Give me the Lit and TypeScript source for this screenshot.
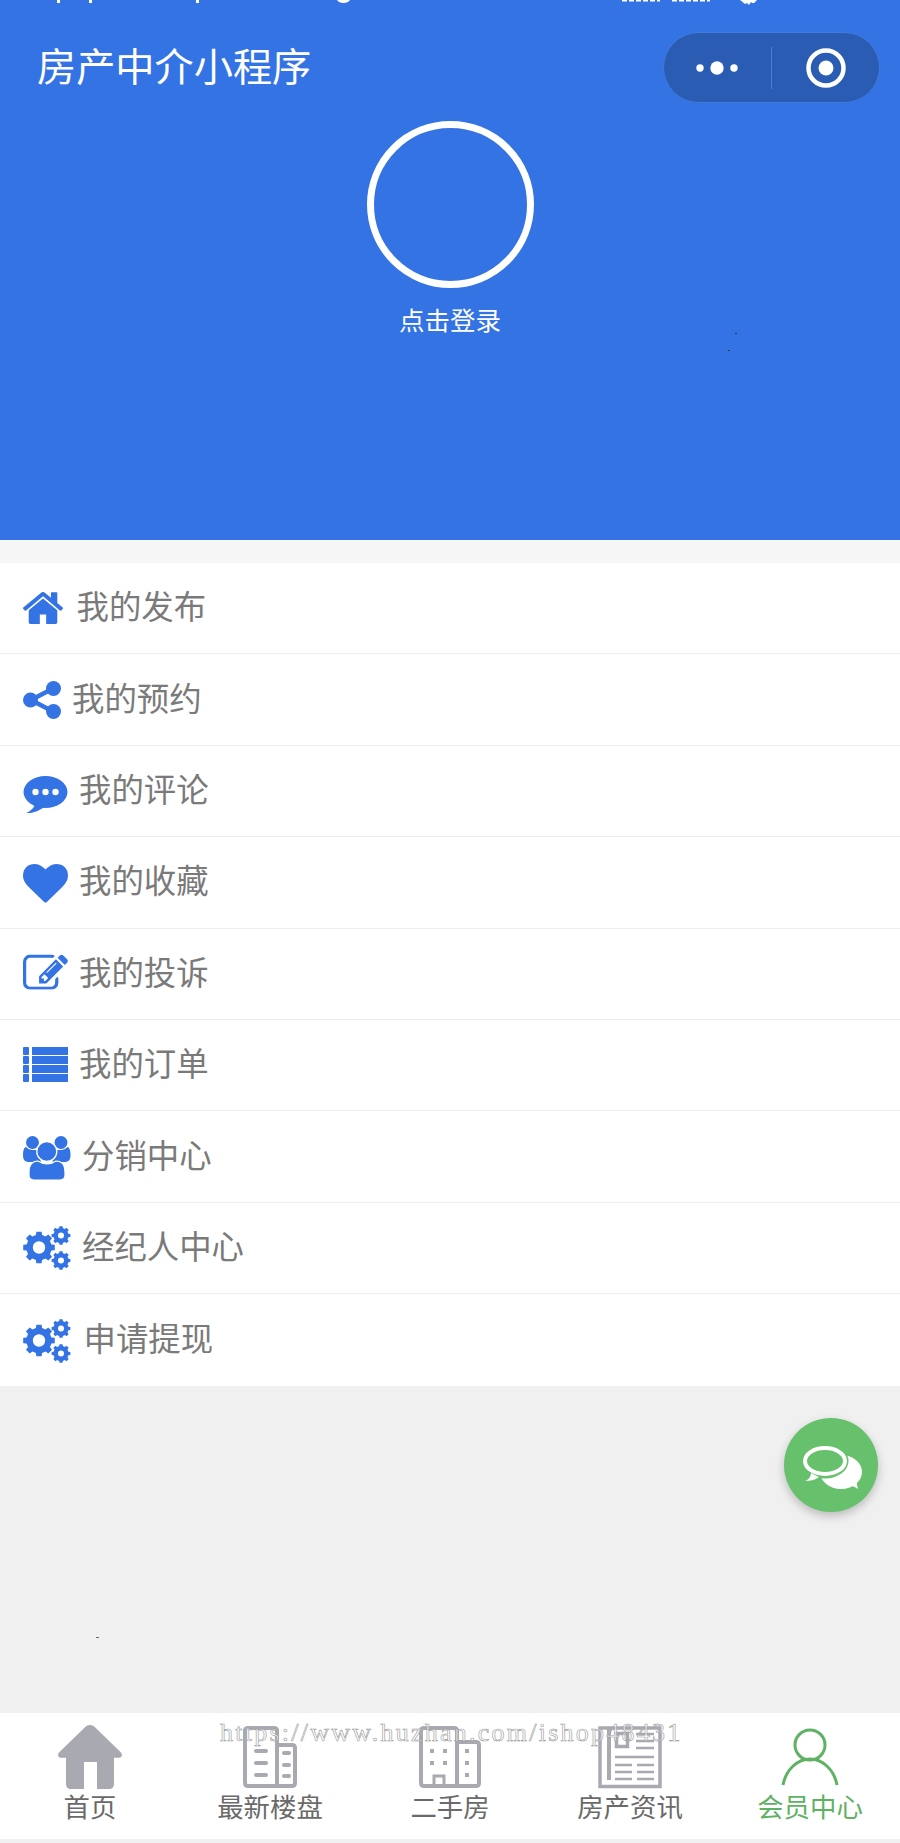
import { LitElement, html, css, svg } from "lit";
import { customElement } from "lit/decorators.js";

const BLUE = "#3373e4";

function gear(cx: number, cy: number, ro: number, ri: number, hole: number, teeth = 8): string {
  const pts: string[] = [];
  const step = (Math.PI * 2) / teeth;
  for (let i = 0; i < teeth; i++) {
    const a = i * step - Math.PI / 2;
    const w = step * 0.21;
    const w2 = step * 0.31;
    const p = [
      [ri, a - w2],
      [ro, a - w],
      [ro, a + w],
      [ri, a + w2],
    ];
    for (const [r, t] of p) {
      pts.push(`${(cx + r * Math.cos(t)).toFixed(2)} ${(cy + r * Math.sin(t)).toFixed(2)}`);
    }
  }
  const h = `M${cx - hole} ${cy}a${hole} ${hole} 0 1 0 ${hole * 2} 0a${hole} ${hole} 0 1 0 ${-hole * 2} 0z`;
  return `M${pts.join("L")}z${h}`;
}

const cogs = svg`<g fill="${BLUE}" fill-rule="evenodd">
  <path d="${gear(16, 21.5, 16, 12.8, 6.2)}" />
  <path d="${gear(38, 9.5, 9.5, 7.6, 3)}" />
  <path d="${gear(38, 34.5, 9.5, 7.6, 3)}" />
</g>`;

interface MenuItem {
  label: string;
  w: number;
  h: number;
  box: string;
  gap: number;
  dy: number;
  art: unknown;
}

const items: MenuItem[] = [
  {
    label: "我的发布",
    w: 40,
    h: 32,
    box: "26 253 1612 1283",
    gap: 13.5,
    dy: 0,
    art: svg`<path fill="${BLUE}" d="M1408 992v480q0 26-19 45t-45 19h-384v-384h-256v384h-384q-26 0-45-19t-19-45v-480q0-1 .5-3t.5-3l575-474 575 474q1 2 1 6zm223-69l-62 74q-8 9-21 11h-3q-13 0-21-7l-692-577-692 577q-12 8-24 7-13-2-21-11l-62-74q-8-10-7-23.5t11-21.5l719-599q32-26 76-26t76 26l244 204v-195q0-14 9-23t23-9h192q14 0 23 9t9 23v408l219 182q10 8 11 21.5t-7 23.5z"/>`,
  },
  {
    label: "我的预约",
    w: 38,
    h: 38,
    box: "0 0 38 38",
    gap: 11,
    dy: 0,
    art: svg`<g fill="${BLUE}"><circle cx="7.5" cy="19" r="7.5"/><circle cx="30.5" cy="7.5" r="7.500"/><circle cx="30.500" cy="30.500" r="7.500"/></g>
      <path d="M8 19L30 7.5M8 19L30 30.5" stroke="${BLUE}" stroke-width="4.5" fill="none"/>`,
  },
  {
    label: "我的评论",
    w: 45,
    h: 38,
    box: "0 0 45 38",
    gap: 11,
    dy: 4,
    art: svg`<ellipse cx="22.5" cy="16" rx="22" ry="16" fill="${BLUE}"/>
      <path d="M12 27C12 31 8 35 3 37C11 37.5 18 34 22 30Z" fill="${BLUE}"/>
      <g fill="#fff"><circle cx="12.5" cy="16" r="3.2"/><circle cx="22.5" cy="16" r="3.2"/><circle cx="32.5" cy="16" r="3.2"/></g>`,
  },
  {
    label: "我的收藏",
    w: 45,
    h: 38.6,
    box: "0 128 1792 1536",
    gap: 11,
    dy: 1,
    art: svg`<path fill="${BLUE}" d="M896 1664q-26 0-44-18l-624-602q-10-8-27.5-26t-55.5-65.5-68-97.5-53.5-121-23.5-138q0-220 127-344t351-124q62 0 126.5 21.5t120 58 95.5 68.5 76 68q36-36 76-68t95.5-68.5 120-58 126.5-21.5q224 0 351 124t127 344q0 221-229 450l-623 600q-18 18-44 18z"/>`,
  },
  {
    label: "我的投诉",
    w: 45,
    h: 35.4,
    box: "0 128 1792 1408",
    gap: 11,
    dy: -1.5,
    art: svg`<path fill="${BLUE}" d="M888 1184l116-116-152-152-116 116v56h96v96h56zm440-720q-16-16-33 1l-350 350q-17 17-1 33t33-1l350-350q17-17 1-33zm80 594v190q0 119-84.5 203.5t-203.5 84.5h-832q-119 0-203.5-84.5t-84.5-203.5v-832q0-119 84.5-203.5t203.5-84.5h832q63 0 117 25 15 7 18 23 3 17-9 29l-49 49q-14 14-32 8-23-6-45-6h-832q-66 0-113 47t-47 113v832q0 66 47 113t113 47h832q66 0 113-47t47-113v-126q0-13 9-22l64-64q15-15 35-7t20 29zm-96-738l288 288-672 672h-288v-288zm444 132l-92 92-288-288 92-92q28-28 68-28t68 28l152 152q28 28 28 68t-28 68z"/>`,
  },
  {
    label: "我的订单",
    w: 45,
    h: 35,
    box: "0 0 45 35",
    gap: 11,
    dy: -1,
    art: svg`<g fill="${BLUE}">
      ${[0, 9, 18, 27].map(
        (y) => svg`<rect x="0" y="${y}" width="6" height="8" rx="1"/><rect x="9" y="${y}" width="36" height="8"/>`
      )}</g>`,
  },
  {
    label: "分销中心",
    w: 48,
    h: 44,
    box: "0 0 48 44",
    gap: 11,
    dy: 1,
    art: svg`<g fill="${BLUE}">
      <circle cx="9.5" cy="6.5" r="6.5"/><circle cx="38" cy="6.5" r="6.5"/>
      <path d="M0 19c0-4 1-8 3-8 2 2 4 3 7 3h5l3 12H6c-4 0-6-2-6-7z"/>
      <path d="M47.500 19c0-4-1-8-3-8-2 2-4 3-7 3h-5l-3 12h12c4 0 6-2 6-7z"/>
      <circle cx="23.8" cy="15.500" r="10" stroke="#fff" stroke-width="1.300"/>
      <path d="M6 36c0-7 3-11 9-11 3 2 6 3 9 3s6-1 9-3c6 0 9 4 9 11v3c0 3-2 5-5 5H11c-3 0-5-2-5-5z" stroke="#fff" stroke-width="1.200"/>
    </g>`,
  },
  { label: "经纪人中心", w: 48, h: 44, box: "0 0 48 44", gap: 11, dy: 0, art: cogs },
  { label: "申请提现", w: 48, h: 44, box: "0 0 48 44", gap: 12.5, dy: 1, art: cogs },
];

const GRAY = "#a9a9b2";
const tabs = [
  {
    label: "首页",
    active: false,
    art: svg`<path fill="${GRAY}" d="M32 0c2 0 3.500 .8 5 2.300L62.500 27c2.500 2.500 1.500 5.500-1.500 5.800H56V59c0 3-2 5-5 5H39V37H26V64H13c-3 0-5-2-5-5V32.800H3C0 32.500-1 29.500 1.500 27L27 2.300C28.500 .8 30 0 32 0z"/>`,
  },
  {
    label: "最新楼盘",
    active: false,
    art: svg`<g fill="none" stroke="${GRAY}" stroke-width="4">
        <path d="M39 61V6c0-2-1-3-3-3H10C8 3 7 4 7 6v52c0 2 1 3 3 3h44c2 0 3-1 3-3V23c0-2-1-3-3-3H39"/>
      </g>
      <g fill="${GRAY}">
        ${[24, 36, 48].map((y) => svg`<rect x="16" y="${y}" width="14" height="4" rx="2"/>`)}
        ${[26, 38, 49].map((y) => svg`<rect x="44" y="${y}" width="9" height="4" rx="2"/>`)}
      </g>`,
  },
  {
    label: "二手房",
    active: false,
    art: svg`<g fill="none" stroke="${GRAY}" stroke-width="4">
        <path d="M39 61V6c0-2-1-3-3-3H6C4 3 3 4 3 6v52c0 2 1 3 3 3h52c2 0 3-1 3-3V20c0-2-1-3-3-3H39"/>
      </g>
      <path d="M16 61V51h10v10" fill="none" stroke="${GRAY}" stroke-width="3"/>
      <g fill="${GRAY}">
        ${[
          [12, 24],
          [25, 24],
          [12, 36],
          [25, 36],
          [47, 24],
          [47, 36],
          [47, 48],
        ].map(([x, y]) => svg`<rect x="${x}" y="${y}" width="4" height="4"/>`)}
      </g>`,
  },
  {
    label: "房产资讯",
    active: false,
    art: svg`<g fill="none" stroke="${GRAY}">
        <path d="M2 3H62V61.500H2Z" stroke-width="3.500"/>
        <path d="M11 4V55" stroke-width="4"/>
        <rect x="18.500" y="8.500" width="11" height="13" stroke-width="3.500"/>
        <path d="M38 9H56M38 16H56M38 23H56M17 32H56M17 40H34M39 40H56M17 47H34M39 47H56M17 54H34M39 54H56" stroke-width="2.500"/>
      </g>`,
  },
  {
    label: "会员中心",
    active: true,
    art: svg`<g fill="none" stroke="#5fb264" stroke-width="3">
        <circle cx="32" cy="20" r="15"/>
        <path d="M5 60C8 44 20 34 32 34S56 44 59 60"/>
      </g>`,
  },
];

@customElement("app-root")
export class AppRoot extends LitElement {
  static styles = css`
    :host {
      display: flex;
      flex-direction: column;
      position: relative;
      width: 900px;
      height: 1843px;
      background: #f0f0f0;
      overflow: hidden;
      font-family: "Noto Sans CJK SC", "Noto Sans", sans-serif;
    }
    .header {
      position: relative;
      flex: none;
      height: 540px;
      background: #3373e4;
      display: flex;
      flex-direction: column;
      align-items: center;
      color: #fff;
    }
    .status {
      position: absolute;
      left: 0;
      top: 0;
    }
    .nav {
      align-self: stretch;
      margin-top: 32px;
      height: 71px;
      padding: 0 20px 0 37px;
      display: flex;
      align-items: center;
      justify-content: space-between;
    }
    .title {
      font-size: 39.2px;
      line-height: 50px;
      margin-bottom: 7px;
    }
    .pill {
      box-sizing: border-box;
      width: 217px;
      height: 71px;
      border-radius: 36px;
      background: #2a5cb4;
      border: 1px solid #4279da;
      display: flex;
      align-items: center;
    }
    .pill-side {
      flex: 1;
      display: flex;
      justify-content: center;
      align-items: center;
    }
    .pill-rule {
      width: 1px;
      height: 42px;
      background: #4a7fd8;
    }
    .avatar {
      box-sizing: border-box;
      margin-top: 18px;
      width: 167px;
      height: 167px;
      border-radius: 50%;
      border: 7px solid #fff;
    }
    .login {
      margin-top: 14px;
      font-size: 25.5px;
      line-height: 34px;
    }
    .gap {
      flex: none;
      height: 23px;
      background: #f6f6f6;
    }
    .menu {
      flex: none;
      background: #fff;
    }
    .row {
      box-sizing: border-box;
      height: 91.4px;
      padding-left: 23px;
      display: flex;
      align-items: center;
      border-bottom: 1.5px solid #eeeeee;
      color: #7a7a7a;
      font-size: 32.4px;
    }
    .row:last-child {
      border-bottom: none;
    }
    .row svg {
      flex: none;
    }
    .row-label {
      line-height: 44px;
      padding-bottom: 6px;
    }
    .spacer {
      flex: 1;
    }
    .tabbar {
      flex: none;
      height: 126px;
      margin-bottom: 4px;
      background: #fff;
      display: grid;
      grid-template-columns: repeat(5, 1fr);
    }
    .tab {
      display: flex;
      flex-direction: column;
      align-items: center;
      padding-top: 12px;
      color: #6a6a6a;
      font-size: 26.4px;
      line-height: 34px;
    }
    .tab.on {
      color: #5fb264;
    }
    .fab {
      position: absolute;
      left: 784px;
      top: 1418px;
      width: 94px;
      height: 94px;
      border-radius: 50%;
      background: #67c06b;
      box-shadow: 0 4px 10px rgba(0, 0, 0, 0.22);
    }
    .mark {
      position: absolute;
      left: 220px;
      top: 1716px;
      white-space: nowrap;
      font-family: "Liberation Serif", serif;
      font-size: 26px;
      line-height: 34px;
      letter-spacing: 2.25px;
      color: rgba(255, 255, 255, 0.6);
      -webkit-text-stroke: 0.6px #999;
    }
    .speck {
      position: absolute;
      width: 2px;
      height: 1px;
      background: #334;
    }
    .s1 {
      left: 735px;
      top: 333px;
    }
    .s2 {
      left: 728px;
      top: 350px;
    }
    .s3 {
      left: 96px;
      top: 1637px;
      width: 3px;
      background: #666;
    }
  `;

  render() {
    return html`
      <div class="header">
        <svg class="status" width="900" height="6" viewBox="0 0 900 6">
          <g fill="#fff">
            <rect x="57" y="0" width="3" height="3"/>
            <rect x="89" y="0" width="3" height="3"/>
            <rect x="196" y="0" width="3" height="3"/>
            <path d="M337 0h13c-1 2-4 3-6.500 3S338 2 337 0z"/>
            <path d="M740 0h17l-3 3h-2l-1-1-2 3-2-2-2 1z"/>
          </g>
          <path d="M622 .8h38M672 .8h38" stroke="#fff" stroke-width="1.600" stroke-dasharray="5 2" fill="none"/>
        </svg>
        <div class="nav">
          <div class="title">房产中介小程序</div>
          <div class="pill">
            <div class="pill-side">
              <svg width="44" height="16" viewBox="0 0 44 16" fill="#fff">
                <circle cx="4" cy="8" r="3.700"/>
                <circle cx="21" cy="8" r="6.700"/>
                <circle cx="38" cy="8" r="3.700"/>
              </svg>
            </div>
            <div class="pill-rule"></div>
            <div class="pill-side">
              <svg width="42" height="42" viewBox="0 0 42 42">
                <circle cx="21" cy="21" r="17.500" fill="none" stroke="#fff" stroke-width="4.500"/>
                <circle cx="21" cy="21" r="7.500" fill="#fff"/>
              </svg>
            </div>
          </div>
        </div>
        <div class="avatar"></div>
        <div class="login">点击登录</div>
        <i class="speck s1"></i>
        <i class="speck s2"></i>
      </div>
      <div class="gap"></div>
      <div class="menu">
        ${items.map(
          (it) => html`<div class="row">
            <svg
              width="${it.w}"
              height="${it.h}"
              viewBox="${it.box}"
              style="margin-right:${it.gap}px;transform:translateY(${it.dy}px)"
            >${it.art}</svg>
            <span class="row-label">${it.label}</span>
          </div>`
        )}
      </div>
      <div class="spacer"></div>
      <div class="tabbar">
        ${tabs.map(
          (t) => html`<div class="tab ${t.active ? "on" : ""}">
            <svg width="64" height="64" viewBox="0 0 64 64">${t.art}</svg>
            <span>${t.label}</span>
          </div>`
        )}
      </div>
      <div class="fab">
        <svg width="94" height="94" viewBox="0 0 94 94">
          <ellipse cx="57" cy="54" rx="21" ry="17" fill="#fff"/>
          <path d="M62 66c5 1 9 3 12 5-1-4-2-8-1-11z" fill="#fff"/>
          <ellipse cx="41" cy="43" rx="23.500" ry="17.500" fill="#67c06b"/>
          <path d="M27 55c0 4-3 7-6 8 5 0 10-1 14-4z" fill="#fff"/>
          <ellipse cx="41" cy="43" rx="20" ry="13" fill="#67c06b" stroke="#fff" stroke-width="4"/>
        </svg>
      </div>
      <div class="mark">https://www.huzhan.com/ishop48431</div>
      <i class="speck s3"></i>
    `;
  }
}
